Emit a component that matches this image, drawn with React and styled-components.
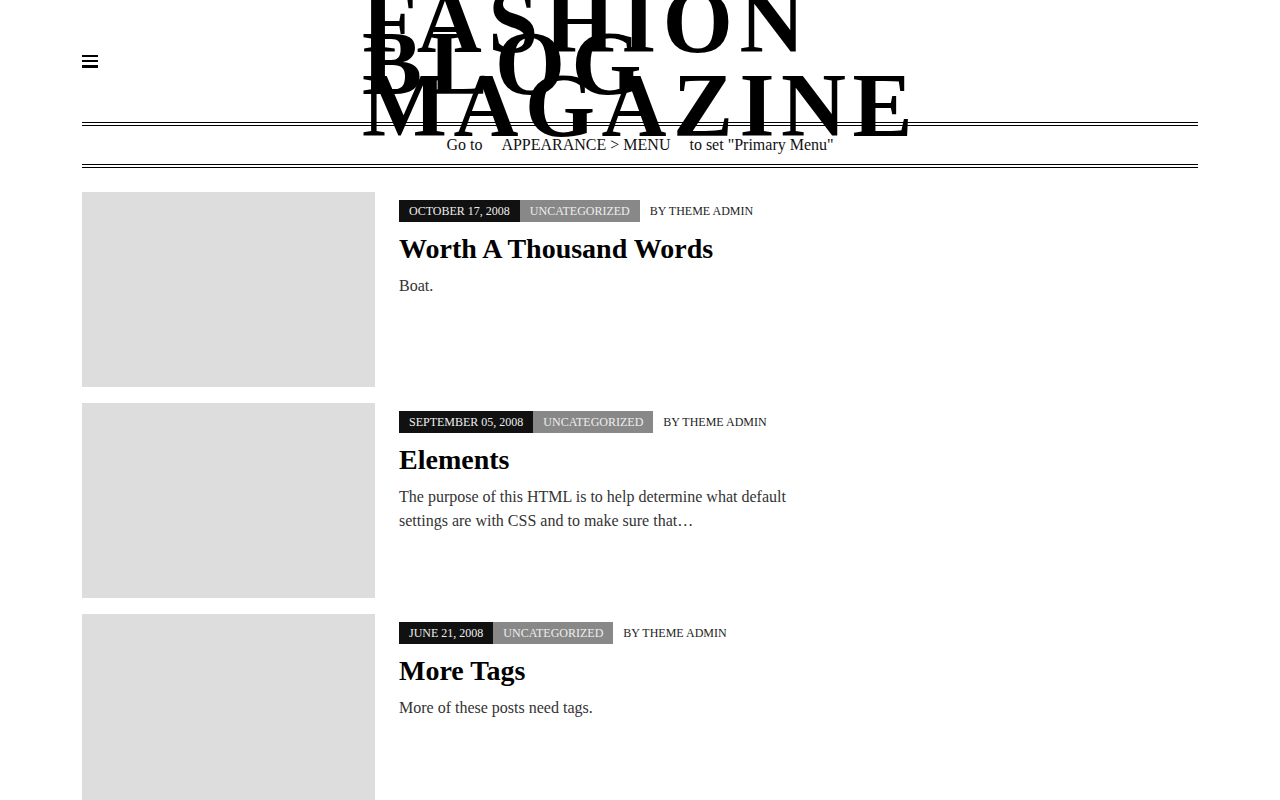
import React from "react";
import styled, { createGlobalStyle } from "styled-components";

const Global = createGlobalStyle`
  html, body { margin: 0; padding: 0; background: #fff; }
  body { font-family: "Liberation Serif", "Times New Roman", serif; color: #111; }
  * { box-sizing: border-box; }
`;

const Page = styled.div`
  width: 1116px;
  margin: 0 auto;
`;

const Header = styled.header`
  display: grid;
  grid-template-columns: 280px 1fr 280px;
  grid-template-rows: 122px;
  height: 122px;
  position: relative;
  z-index: 1;
`;

const MenuToggle = styled.button`
  align-self: center;
  justify-self: start;
  background: none;
  border: 0;
  padding: 0;
  margin: 0;
  width: 16px;
  height: 13px;
  display: flex;
  flex-direction: column;
  justify-content: space-between;
  cursor: pointer;
`;

const Bar = styled.span`
  display: block;
  height: 2.5px;
  width: 16px;
  background: #000;
`;

const SiteTitle = styled.h1`
  margin: 0;
  padding-top: 1px;
  font-family: "Liberation Serif", "Times New Roman", serif;
  font-weight: 700;
  font-size: 90px;
  line-height: 42px;
  letter-spacing: 6.5px;
  text-transform: uppercase;
  color: #000;
  white-space: normal;
  width: 556px;
`;

const Nav = styled.nav`
  height: 46px;
  border-top: 4px double #000;
  border-bottom: 4px double #000;
  display: flex;
  align-items: center;
  justify-content: center;
  font-size: 16px;
  color: #111;
`;

const NavLink = styled.span`
  margin: 0 19px;
`;

const Content = styled.div`
  display: grid;
  grid-template-columns: 744px 1fr;
  margin-top: 24px;
`;

const PostList = styled.main`
  display: flex;
  flex-direction: column;
  gap: 16px;
`;

const Post = styled.article`
  display: flex;
  gap: 24px;
`;

const Thumb = styled.div`
  flex: 0 0 293px;
  height: 195px;
  background: #dddddd;
`;

const Body = styled.div`
  flex: 1;
  padding-top: 8px;
`;

const Meta = styled.div`
  display: flex;
  align-items: stretch;
  height: 22px;
  font-size: 12px;
  text-transform: uppercase;
`;

const Tag = styled.span`
  display: flex;
  align-items: center;
  padding: 0 10px;
  background: ${(p) => p.$bg || "transparent"};
  color: ${(p) => p.$color || "#222"};
`;

const Title = styled.h2`
  margin: 10px 0 0;
  font-size: 28px;
  line-height: 34px;
  font-weight: 700;
  color: #000;
`;

const Excerpt = styled.p`
  margin: 8px 0 0;
  font-size: 16px;
  line-height: 24px;
  color: #333;
`;

const posts = [
  { date: "October 17, 2008", title: "Worth A Thousand Words", excerpt: "Boat." },
  {
    date: "September 05, 2008",
    title: "Elements",
    excerpt:
      "The purpose of this HTML is to help determine what default settings are with CSS and to make sure that…",
  },
  { date: "June 21, 2008", title: "More Tags", excerpt: "More of these posts need tags." },
];

export default function App() {
  return (
    <>
      <Global />
      <Page>
        <Header>
          <MenuToggle aria-label="Menu">
            <Bar />
            <Bar />
            <Bar />
          </MenuToggle>
          <SiteTitle>Fashion Blog Magazine</SiteTitle>
          <div />
        </Header>
        <Nav>
          <span>Go to</span>
          <NavLink>APPEARANCE &gt; MENU</NavLink>
          <span>to set "Primary Menu"</span>
        </Nav>
        <Content>
          <PostList>
            {posts.map((p) => (
              <Post key={p.title}>
                <Thumb />
                <Body>
                  <Meta>
                    <Tag $bg="#111" $color="#eee">{p.date}</Tag>
                    <Tag $bg="#888" $color="#eee">Uncategorized</Tag>
                    <Tag>By Theme Admin</Tag>
                  </Meta>
                  <Title>{p.title}</Title>
                  <Excerpt>{p.excerpt}</Excerpt>
                </Body>
              </Post>
            ))}
          </PostList>
          <aside />
        </Content>
      </Page>
    </>
  );
}
